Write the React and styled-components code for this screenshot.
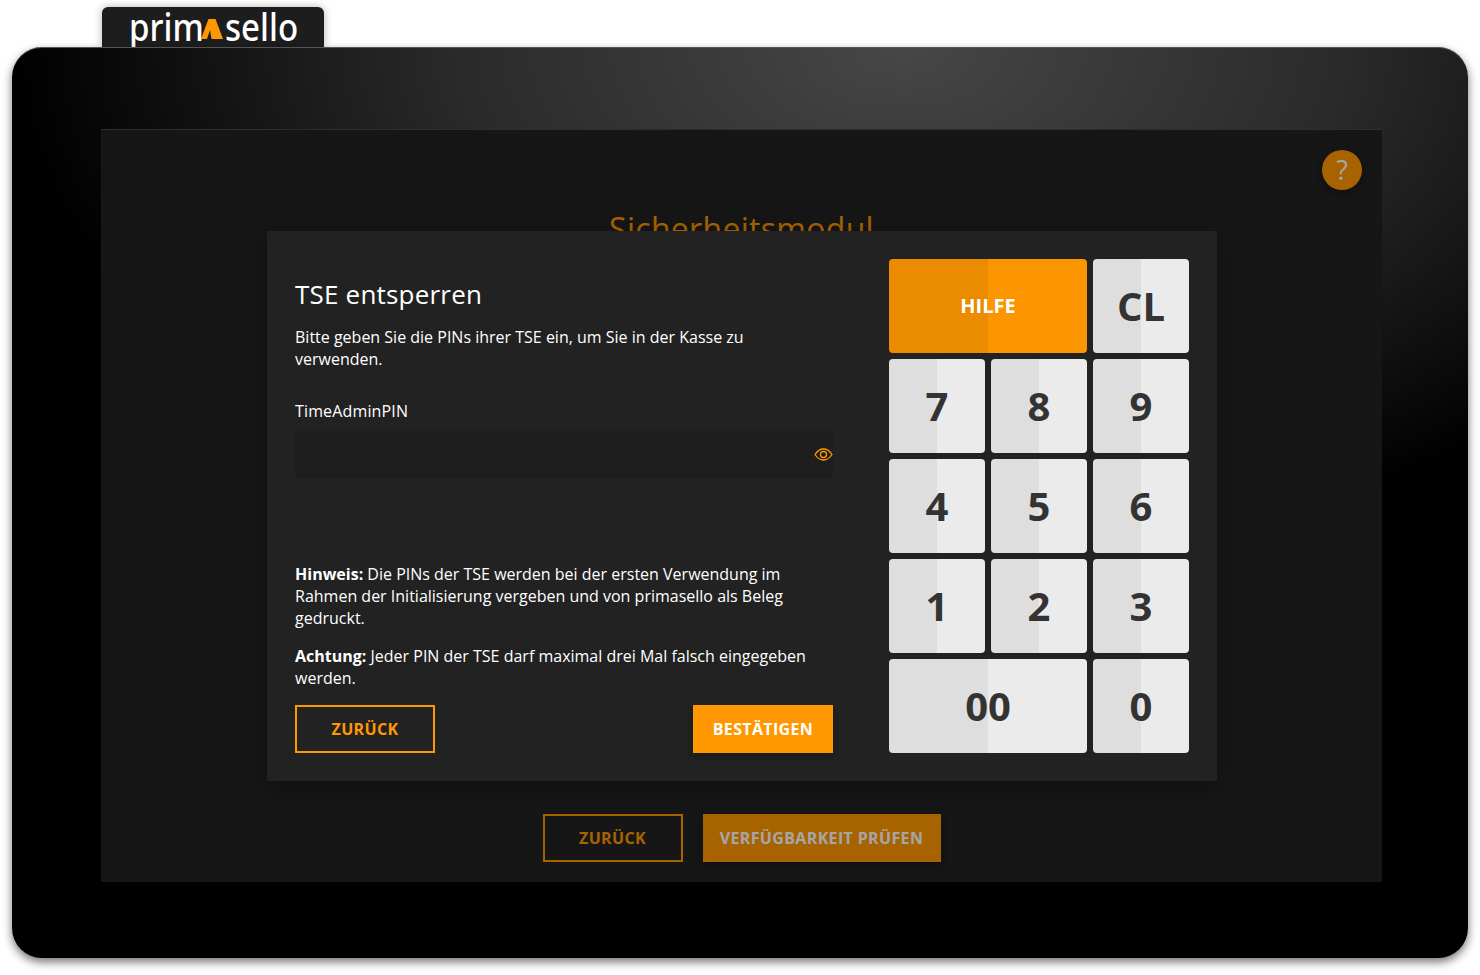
import React from "react";
import styled, { createGlobalStyle } from "styled-components";

const GlobalStyle = createGlobalStyle`
    html, body {
        margin: 0;
        padding: 0;
        background: #fff;
        font-family: "Open Sans", "Noto Sans", sans-serif;
    }
`;

const Page = styled.div`
    width: 1480px;
    height: 975px;
    padding: 7px 12px 0;
    box-sizing: border-box;
    overflow: hidden;
`;

const LogoTab = styled.div`
    width: 222px;
    height: 40px;
    margin-left: 90px;
    padding-left: 27px;
    box-sizing: border-box;
    background: #1d1d1d;
    border-radius: 6px 6px 0 0;
    box-shadow: 0 0 8px rgba(0, 0, 0, 0.3);
    display: flex;
    align-items: flex-start;
    color: #fff;
`;

const LogoWord = styled.span`
    display: block;
    width: ${(p) => p.$width}px;
    font-family: "Noto Sans", sans-serif;
    font-size: 38px;
    font-weight: 500;
    line-height: 38px;
    white-space: nowrap;
    transform: scaleX(0.87);
    transform-origin: left top;
`;

const LogoMark = styled.svg`
    width: 22px;
    height: 20px;
    margin: 12px 2px 0 2px;
    flex: none;
`;

const Frame = styled.div`
    position: relative;
    width: 1456px;
    height: 911px;
    box-sizing: border-box;
    padding: 83px 86px 76px 89px;
    border-radius: 30px;
    background: radial-gradient(ellipse 890px 520px at 890px 0, #474747 0%, #2a2a2a 50%, #000 100%), #000;
    box-shadow: 0 4px 10px rgba(0, 0, 0, 0.55), inset 0 1px 0 #555;
`;

const Screen = styled.div`
    position: relative;
    height: 100%;
    background: #222;
    box-shadow: 0 -1px 0 #2e2e2e;
    display: flex;
    flex-direction: column;
    align-items: center;
`;

const HelpBubble = styled.div`
    position: absolute;
    top: 20px;
    right: 20px;
    width: 40px;
    height: 40px;
    border-radius: 50%;
    background: #ff9800;
    color: #fff;
    font-size: 27px;
    font-weight: 400;
    line-height: 40px;
    text-align: center;
    box-shadow: 0 2px 6px rgba(0, 0, 0, 0.4);
`;

const PageTitle = styled.h1`
    margin: 77px 0 0;
    font-size: 32px;
    line-height: 44px;
    font-weight: 400;
    letter-spacing: 0.3px;
    color: #ff9800;
`;

const PageActions = styled.div`
    margin-top: auto;
    padding-bottom: 20px;
    display: flex;
    gap: 20px;
`;

const Button = styled.button`
    height: 48px;
    width: ${(p) => p.$width}px;
    box-sizing: border-box;
    padding: 0;
    font-family: inherit;
    font-size: 16px;
    font-weight: 700;
    text-transform: uppercase;
    letter-spacing: 0.35px;
    border-radius: 0;
    border: ${(p) => (p.$primary ? "none" : "2px solid #ff9800")};
    background: ${(p) => (p.$primary ? "#ff9800" : "transparent")};
    color: ${(p) => (p.$primary ? "#fff" : "#ff9800")};
    box-shadow: ${(p) => (p.$primary ? "0 3px 8px rgba(0, 0, 0, 0.3)" : "none")};
`;

const Backdrop = styled.div`
    position: absolute;
    inset: 0;
    padding-left: 1px;
    background: rgba(0, 0, 0, 0.35);
    display: flex;
    align-items: center;
    justify-content: center;
`;

const Modal = styled.div`
    width: 950px;
    height: 550px;
    box-sizing: border-box;
    padding: 28px;
    background: #222;
    box-shadow: 0 6px 20px rgba(0, 0, 0, 0.3);
    display: flex;
    justify-content: space-between;
`;

const FormColumn = styled.div`
    width: 538px;
    display: flex;
    flex-direction: column;
    color: #fff;
    font-size: 16px;
    line-height: 22px;
`;

const ModalTitle = styled.h2`
    margin: 17px 0 0;
    font-size: 26px;
    line-height: 36px;
    font-weight: 400;
    letter-spacing: 0.2px;
`;

const Paragraph = styled.p`
    margin: ${(p) => p.$top || 0}px 0 0;
    max-width: ${(p) => p.$maxWidth || 538}px;
`;

const FieldLabel = styled.label`
    display: block;
    margin-top: 30px;
    letter-spacing: 0.15px;
`;

const InputWrap = styled.div`
    position: relative;
    margin-top: 9px;
    height: 47px;
    background: #1e1e1e;
`;

const EyeIcon = styled.svg`
    position: absolute;
    right: 0;
    top: 17px;
    width: 19px;
    height: 13px;
`;

const FormActions = styled.div`
    margin-top: auto;
    display: flex;
    justify-content: space-between;
`;

const Keypad = styled.div`
    width: 300px;
    display: grid;
    grid-template-columns: repeat(3, 96px);
    grid-auto-rows: 94px;
    gap: 6px;
`;

const Key = styled.div`
    grid-column: span ${(p) => p.$span || 1};
    padding-bottom: 2px;
    box-sizing: border-box;
    border-radius: 4px;
    display: flex;
    align-items: center;
    justify-content: center;
    font-size: ${(p) => (p.$help ? "20px" : "40px")};
    font-weight: 700;
    color: ${(p) => (p.$help ? "#fff" : "#333")};
    background: ${(p) =>
        p.$help
            ? "linear-gradient(90deg, #ea8b00 50%, #fb9600 50%)"
            : "linear-gradient(90deg, #dedede 50%, #ebebeb 50%)"};
`;

const keys = [
    { label: "HILFE", span: 2, help: true },
    { label: "CL" },
    { label: "7" },
    { label: "8" },
    { label: "9" },
    { label: "4" },
    { label: "5" },
    { label: "6" },
    { label: "1" },
    { label: "2" },
    { label: "3" },
    { label: "00", span: 2 },
    { label: "0" },
];

export default function App() {
    return (
        <Page>
            <GlobalStyle />
            <LogoTab>
                <LogoWord $width={70}>prim</LogoWord>
                <LogoMark viewBox="0 0 22 20">
                    <path d="M0 20 L7.5 0 H14.5 L22 20 H10.5 L9 11 L6 20 Z" fill="#ff9800" />
                </LogoMark>
                <LogoWord $width={73}>sello</LogoWord>
            </LogoTab>
            <Frame>
                <Screen>
                    <HelpBubble>?</HelpBubble>
                    <PageTitle>Sicherheitsmodul</PageTitle>
                    <PageActions>
                        <Button $width={140}>Zurück</Button>
                        <Button $width={238} $primary>Verfügbarkeit prüfen</Button>
                    </PageActions>
                    <Backdrop>
                        <Modal>
                            <FormColumn>
                                <ModalTitle>TSE entsperren</ModalTitle>
                                <Paragraph $top={14} $maxWidth={520}>
                                    Bitte geben Sie die PINs ihrer TSE ein, um Sie in der Kasse zu verwenden.
                                </Paragraph>
                                <FieldLabel>TimeAdminPIN</FieldLabel>
                                <InputWrap>
                                    <EyeIcon viewBox="0 0 19 13" fill="none" stroke="#ff9800" strokeWidth="1.3">
                                        <path d="M1 6.5 C4 1.8 7 1 9.5 1 C12 1 15 1.8 18 6.5 C15 11.2 12 12 9.5 12 C7 12 4 11.2 1 6.5 Z" />
                                        <circle cx="9.5" cy="6.5" r="3" />
                                    </EyeIcon>
                                </InputWrap>
                                <Paragraph $top={85}>
                                    <strong>Hinweis:</strong> Die PINs der TSE werden bei der ersten Verwendung im Rahmen der Initialisierung vergeben und von primasello als Beleg gedruckt.
                                </Paragraph>
                                <Paragraph $top={16}>
                                    <strong>Achtung:</strong> Jeder PIN der TSE darf maximal drei Mal falsch eingegeben werden.
                                </Paragraph>
                                <FormActions>
                                    <Button $width={140}>Zurück</Button>
                                    <Button $width={140} $primary>Bestätigen</Button>
                                </FormActions>
                            </FormColumn>
                            <Keypad>
                                {keys.map((key) => (
                                    <Key key={key.label} $span={key.span} $help={key.help}>
                                        {key.label}
                                    </Key>
                                ))}
                            </Keypad>
                        </Modal>
                    </Backdrop>
                </Screen>
            </Frame>
        </Page>
    );
}
